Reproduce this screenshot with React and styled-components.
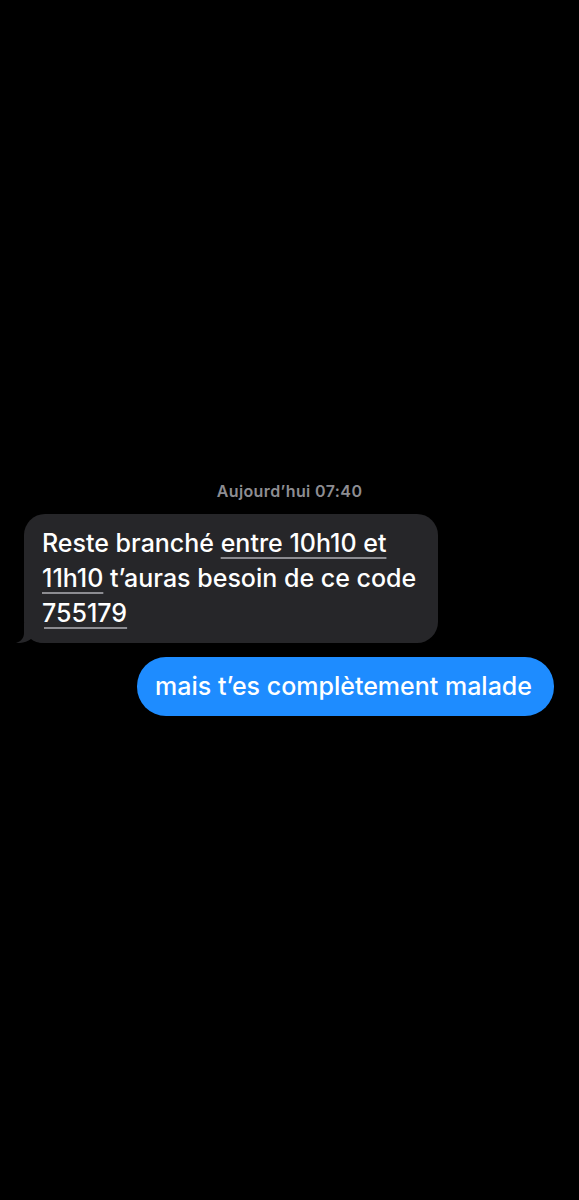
import React from "react";
import styled, { createGlobalStyle } from "styled-components";

const Global = createGlobalStyle`
  html, body { margin: 0; padding: 0; background: #000; }
  body { font-family: Inter, "Noto Sans", "DejaVu Sans", sans-serif; -webkit-font-smoothing: antialiased; }
`;

const Screen = styled.div`
  width: 579px;
  height: 1200px;
  background: #000;
  display: flex;
  flex-direction: column;
  padding-top: 481px;
  box-sizing: border-box;
`;

const Stamp = styled.div`
  text-align: center;
  color: #8d8d92;
  font-size: 16px;
  font-weight: 600;
  line-height: 20px;
  letter-spacing: 0.4px;
  margin-bottom: 13px;
`;

const Row = styled.div`
  display: flex;
  justify-content: ${(p) => (p.$out ? "flex-end" : "flex-start")};
  padding: 0 25px 0 24px;
  margin-bottom: ${(p) => p.$gap || 0}px;
`;

const Bubble = styled.div`
  position: relative;
  box-sizing: border-box;
  max-width: ${(p) => (p.$out ? "440px" : "414px")};
  padding: 12px ${(p) => (p.$out ? "22px" : "18px")} 12px ${(p) => (p.$out ? "18px" : "18px")};
  border-radius: ${(p) => (p.$out ? "29px" : "21px")};
  background: ${(p) => (p.$out ? "#1e8cff" : "#262629")};
  color: #fff;
  font-size: 25px;
  line-height: 35px;
  font-weight: 500;
  letter-spacing: 0;
`;

const Link = styled.span`
  text-decoration: underline;
  text-decoration-color: #8c8c91;
  text-decoration-thickness: 2px;
  text-underline-offset: 5px;
`;

const Tail = styled.svg`
  position: absolute;
  left: -8px;
  bottom: 0;
  width: 28px;
  height: 20px;
`;

export default function App() {
  return (
    <>
      <Global />
      <Screen>
        <Stamp>Aujourd’hui 07:40</Stamp>
        <Row $gap={14}>
          <Bubble>
            Reste branché <Link>entre 10h10 et 11h10</Link> t’auras besoin de ce code <Link>755179</Link>
            <Tail viewBox="0 0 28 20">
              <path
                d="M8 0 L8 10 C8 15 5 18.5 0 20 C5 20.5 11 19 15 16 C18 18.5 22 20 28 20 L28 0 Z"
                fill="#262629"
              />
            </Tail>
          </Bubble>
        </Row>
        <Row $out>
          <Bubble $out>mais t’es complètement malade</Bubble>
        </Row>
      </Screen>
    </>
  );
}
